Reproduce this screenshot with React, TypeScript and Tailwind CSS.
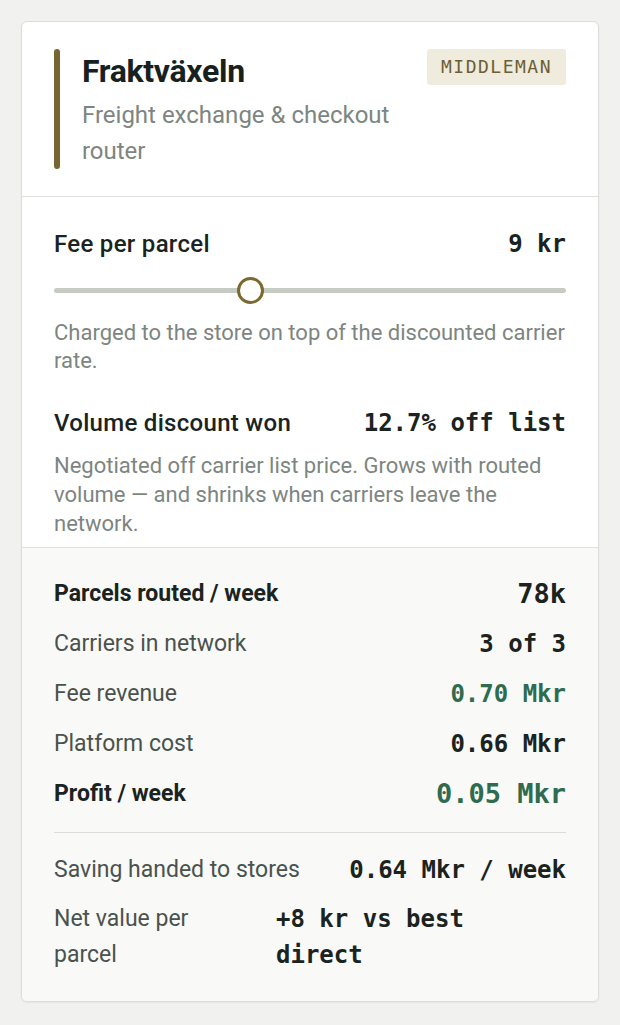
import React from "react";

const sans = { fontFamily: "Roboto, 'Noto Sans', sans-serif" };
const mono = "font-['DejaVu_Sans_Mono','Liberation_Mono',monospace]";

function StatRow({
  label,
  value,
  strong = false,
  tone = "dark",
  big = false,
}: {
  label: string;
  value: string;
  strong?: boolean;
  tone?: "dark" | "green";
  big?: boolean;
}) {
  return (
    <div className="flex items-center justify-between h-[50px]">
      <span
        className={
          strong
            ? "text-[23px] font-bold text-[#1b231f]"
            : "text-[23px] text-[#4a524d]"
        }
      >
        {label}
      </span>
      <span
        className={`${mono} font-bold ${big ? "text-[27px]" : "text-[24px]"} ${
          tone === "green" ? "text-[#2f6b4e]" : "text-[#1b231f]"
        }`}
      >
        {value}
      </span>
    </div>
  );
}

export default function App() {
  return (
    <div className="min-h-screen bg-[#f1f1ef] p-[21px]" style={sans}>
      <div className="rounded-[6px] border border-[#dcddd9] bg-white overflow-hidden shadow-[0_1px_2px_rgba(0,0,0,0.05)]">
        {/* header */}
        <div className="flex items-start gap-6 px-8 pt-[27px] pb-[27px] border-b border-[#dfe0dc]">
          <div className="flex flex-1 gap-[22px]">
            <div className="w-[7px] self-stretch rounded-full bg-[#776631]" />
            <div>
              <h1 className="text-[32px] leading-[44px] font-bold tracking-[-0.3px] text-[#18211d]">
                Fraktväxeln
              </h1>
              <p className="mt-1 text-[24px] leading-[36px] text-[#7d8581]">
                Freight exchange &amp; checkout router
              </p>
            </div>
          </div>
          <span
            className={`${mono} rounded-[3px] bg-[#efebdd] px-[14px] py-[6px] text-[18px] leading-[24px] tracking-[1.5px] text-[#6c5f33]`}
          >
            MIDDLEMAN
          </span>
        </div>

        {/* controls */}
        <div className="px-8 pt-[29px] pb-[9px] border-b border-[#dfe0dc]">
          <div className="flex items-center justify-between h-[36px]">
            <span className="text-[24px] font-medium tracking-[0.3px] text-[#1b231f]">
              Fee per parcel
            </span>
            <span className={`${mono} text-[24px] font-bold text-[#1b231f]`}>9 kr</span>
          </div>
          <div className="relative mt-[26px] h-[5px] rounded-full bg-[#c6cbc4]">
            <div className="absolute left-[183px] top-[-11px] h-[27px] w-[27px] rounded-full border-[3px] border-[#7a6a2e] bg-white" />
          </div>
          <p className="mt-[26px] text-[22px] leading-[28px] text-[#7d8581]">
            Charged to the store on top of the discounted carrier rate.
          </p>
          <div className="mt-[30px] flex items-center justify-between h-[36px]">
            <span className="text-[24px] font-medium tracking-[0.3px] text-[#1b231f]">
              Volume discount won
            </span>
            <span className={`${mono} text-[24px] font-bold text-[#1b231f]`}>12.7% off list</span>
          </div>
          <p className="mt-[10px] text-[22px] leading-[29px] text-[#7d8581]">
            Negotiated off carrier list price. Grows with routed
            <br />
            volume — and shrinks when carriers leave the
            <br />
            network.
          </p>
        </div>

        {/* results */}
        <div className="bg-[#f9f9f7] px-8 pt-[21px] pb-[28px]">
          <StatRow label="Parcels routed / week" value="78k" strong big />
          <StatRow label="Carriers in network" value="3 of 3" />
          <StatRow label="Fee revenue" value="0.70 Mkr" tone="green" />
          <StatRow label="Platform cost" value="0.66 Mkr" />
          <StatRow label="Profit / week" value="0.05 Mkr" strong big tone="green" />
          <div className="mt-[13px] border-t border-[#dcddd9]" />
          <div className="mt-[19px] flex items-center justify-between gap-8">
            <span className="text-[23px] leading-[36px] text-[#4a524d]">Saving handed to stores</span>
            <span className={`${mono} text-[24px] font-bold text-[#1b231f]`}>0.64 Mkr / week</span>
          </div>
          <div className="mt-[13px] flex">
            <span className="w-[222px] shrink-0 text-[23px] leading-[36px] text-[#4a524d]">
              Net value per
              <br />
              parcel
            </span>
            <span className={`${mono} w-[260px] text-[24px] font-bold leading-[36px] text-[#1b231f]`}>
              +8 kr vs best direct
            </span>
          </div>
        </div>
      </div>
    </div>
  );
}
